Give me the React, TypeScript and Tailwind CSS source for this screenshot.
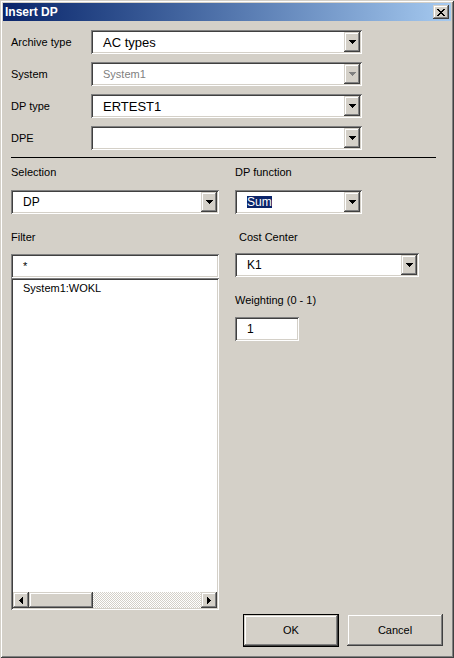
import React from "react";

const RAISED =
  "shadow-[inset_-1px_-1px_0_#404040,inset_1px_1px_0_#d4d0c8,inset_-2px_-2px_0_#808080,inset_2px_2px_0_#ffffff]";
const SUNKEN =
  "shadow-[inset_1px_1px_0_#808080,inset_-1px_-1px_0_#ffffff,inset_2px_2px_0_#404040,inset_-2px_-2px_0_#d4d0c8]";

function DownArrow({ color = "#000" }: { color?: string }) {
  return (
    <svg width="7" height="4" viewBox="0 0 7 4" shapeRendering="crispEdges">
      <rect x="0" y="0" width="7" height="1" fill={color} />
      <rect x="1" y="1" width="5" height="1" fill={color} />
      <rect x="2" y="2" width="3" height="1" fill={color} />
      <rect x="3" y="3" width="1" height="1" fill={color} />
    </svg>
  );
}

function SideArrow({ dir }: { dir: "left" | "right" }) {
  const rects =
    dir === "left"
      ? [
          [3, 0, 1, 7],
          [2, 1, 1, 5],
          [1, 2, 1, 3],
          [0, 3, 1, 1],
        ]
      : [
          [0, 0, 1, 7],
          [1, 1, 1, 5],
          [2, 2, 1, 3],
          [3, 3, 1, 1],
        ];
  return (
    <svg width="4" height="7" viewBox="0 0 4 7" shapeRendering="crispEdges">
      {rects.map((r, i) => (
        <rect key={i} x={r[0]} y={r[1]} width={r[2]} height={r[3]} fill="#000" />
      ))}
    </svg>
  );
}

function CloseX() {
  const rows = [
    [0, 6],
    [1, 5],
    [2, 4],
    [3, 3],
    [2, 4],
    [1, 5],
    [0, 6],
  ];
  return (
    <svg width="8" height="7" viewBox="0 0 8 7" shapeRendering="crispEdges">
      {rows.map((r, y) =>
        r[0] === r[1] ? (
          <rect key={y} x={r[0]} y={y} width="2" height="1" fill="#000" />
        ) : (
          <g key={y}>
            <rect x={r[0]} y={y} width="2" height="1" fill="#000" />
            <rect x={r[1]} y={y} width="2" height="1" fill="#000" />
          </g>
        )
      )}
    </svg>
  );
}

function Combo({
  className,
  children,
  disabled,
}: {
  className: string;
  children?: React.ReactNode;
  disabled?: boolean;
}) {
  return (
    <div className={`h-[24px] p-[2px] bg-white flex ${SUNKEN} ${className}`}>
      <div className="flex-1 flex items-center pl-[10px] overflow-hidden whitespace-nowrap">
        {children}
      </div>
      <div className={`w-[16px] h-full bg-[#d4d0c8] flex items-center justify-center ${RAISED}`}>
        <DownArrow color={disabled ? "#808080" : "#000"} />
      </div>
    </div>
  );
}

function Label({ children, className = "" }: { children: React.ReactNode; className?: string }) {
  return <div className={`text-[11px] leading-[13px] text-black ${className}`}>{children}</div>;
}

export default function App() {
  return (
    <div
      className="w-[454px] h-[658px] bg-[#d4d0c8] p-[3px] flex flex-col font-['Liberation_Sans',Arial,sans-serif] text-black shadow-[inset_1px_1px_0_#d4d0c8,inset_-1px_-1px_0_#404040,inset_2px_2px_0_#ffffff,inset_-2px_-2px_0_#808080]"
    >
      {/* Title bar */}
      <div className="h-[18px] bg-linear-to-r from-[#0a246a] to-[#a6caf0] flex items-center pl-[2px] pr-[2px]">
        <span className="flex-1 text-white font-bold text-[12px] leading-[14px]">Insert DP</span>
        <div className={`w-[16px] h-[14px] bg-[#d4d0c8] flex items-center justify-center ${RAISED}`}>
          <CloseX />
        </div>
      </div>

      {/* Top form */}
      <div className="pl-[8px] pt-[9px] grid grid-cols-[80px_271px] gap-y-[8px] items-center">
        <Label>Archive type</Label>
        <Combo className="w-[271px]">
          <span className="text-[13px] leading-[15px]">AC types</span>
        </Combo>

        <Label>System</Label>
        <Combo className="w-[271px]" disabled>
          <span className="text-[11px] leading-[13px] text-[#808080]">System1</span>
        </Combo>

        <Label>DP type</Label>
        <Combo className="w-[271px]">
          <span className="text-[13px] leading-[15px]">ERTEST1</span>
        </Combo>

        <Label>DPE</Label>
        <Combo className="w-[271px]" />
      </div>

      {/* Separator */}
      <div className="ml-[8px] mt-[7px] w-[425px] h-[1px] bg-black" />

      {/* Two columns */}
      <div className="flex pl-[8px]">
        <div className="w-[208px] flex flex-col">
          <Label className="mt-[8px]">Selection</Label>
          <Combo className="w-[208px] mt-[11px]">
            <span className="text-[12px] leading-[14px]">DP</span>
          </Combo>
          <Label className="mt-[17px]">Filter</Label>
          <div className={`mt-[10px] h-[24px] p-[2px] bg-white flex items-center pl-[12px] ${SUNKEN}`}>
            <span className="text-[11px] leading-[13px]">*</span>
          </div>
          <div className={`h-[332px] p-[2px] bg-white flex flex-col ${SUNKEN}`}>
            <div className="flex-1 pl-[10px] pt-[2px] text-[11px] leading-[13px]">System1:WOKL</div>
            <div className="h-[16px] flex">
              <div className={`w-[16px] h-[16px] bg-[#d4d0c8] flex items-center justify-center ${RAISED}`}>
                <SideArrow dir="left" />
              </div>
              <div className={`w-[64px] h-[16px] bg-[#d4d0c8] ${RAISED}`} />
              <div className="flex-1 bg-[image:repeating-conic-gradient(#d4d0c8_0_25%,#ffffff_0_50%)] bg-[length:2px_2px]" />
              <div className={`w-[16px] h-[16px] bg-[#d4d0c8] flex items-center justify-center ${RAISED}`}>
                <SideArrow dir="right" />
              </div>
            </div>
          </div>
        </div>

        <div className="ml-[16px] flex flex-col">
          <Label className="mt-[8px]">DP function</Label>
          <Combo className="w-[127px] mt-[11px]">
            <span className="text-[12px] leading-[12px] bg-[#0a246a] text-white">Sum</span>
          </Combo>
          <Label className="mt-[17px] ml-[4px]">Cost Center</Label>
          <Combo className="w-[184px] mt-[9px]">
            <span className="text-[12px] leading-[14px]">K1</span>
          </Combo>
          <Label className="mt-[17px]">Weighting (0 - 1)</Label>
          <div className={`mt-[10px] w-[64px] h-[24px] p-[2px] bg-white flex items-center pl-[12px] ${SUNKEN}`}>
            <span className="text-[12px] leading-[14px]">1</span>
          </div>
        </div>
      </div>

      {/* Buttons */}
      <div className="mt-[4px] flex justify-end items-start gap-[8px] pr-[8px]">
        <div className="w-[96px] h-[33px] border border-black">
          <div className={`w-full h-full bg-[#d4d0c8] flex items-center justify-center ${RAISED}`}>
            <span className="text-[11px] leading-[13px]">OK</span>
          </div>
        </div>
        <div className={`w-[96px] h-[32px] bg-[#d4d0c8] flex items-center justify-center ${RAISED}`}>
          <span className="text-[11px] leading-[13px]">Cancel</span>
        </div>
      </div>
    </div>
  );
}
